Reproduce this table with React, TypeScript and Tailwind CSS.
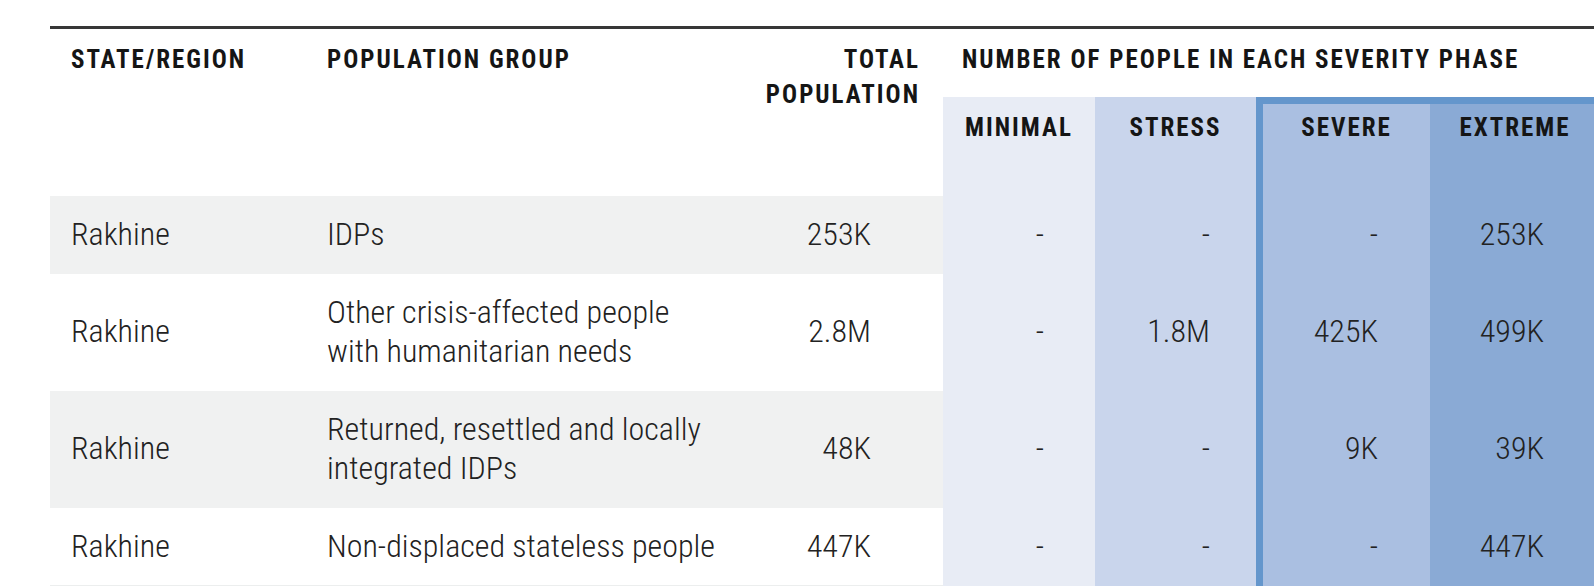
import React from 'react'

interface Row {
  region: string
  group: string[]
  total: string
  minimal: string
  stress: string
  severe: string
  extreme: string
}

const ROWS: Row[] = [
  { region: 'Rakhine', group: ['IDPs'], total: '253K', minimal: '-', stress: '-', severe: '-', extreme: '253K' },
  {
    region: 'Rakhine',
    group: ['Other crisis-affected people', 'with humanitarian needs'],
    total: '2.8M',
    minimal: '-',
    stress: '1.8M',
    severe: '425K',
    extreme: '499K',
  },
  {
    region: 'Rakhine',
    group: ['Returned, resettled and locally', 'integrated IDPs'],
    total: '48K',
    minimal: '-',
    stress: '-',
    severe: '9K',
    extreme: '39K',
  },
  { region: 'Rakhine', group: ['Non-displaced stateless people'], total: '447K', minimal: '-', stress: '-', severe: '-', extreme: '447K' },
]

const COLS = 'grid grid-cols-[256px_440px_197px_152px_161px_174px_170px]'
const head = "font-['Roboto',sans-serif] [font-stretch:75%] font-bold text-[25px] leading-[34.5px] tracking-[0.08em] text-[#151515] uppercase"
const body = "font-['Roboto',sans-serif] [font-stretch:75%] font-light text-[32px] leading-[39.5px] text-[#222]"

export default function App() {
  return (
    <div className="w-full h-[586px] overflow-hidden bg-white">
      <div className="ml-[50px] mt-[26px] w-[1550px]">
        <div className="h-[3px] bg-[#373737]" />

        {/* Header */}
        <div className={`${COLS} grid-rows-[68px_99px]`}>
          <div className={`${head} row-span-2 pl-[21px] pt-[14px]`}>State/Region</div>
          <div className={`${head} row-span-2 pl-[21px] pt-[14px]`}>Population group</div>
          <div className={`${head} row-span-2 pr-[23px] pt-[14px] text-right`}>
            Total
            <br />
            Population
          </div>
          <div className={`${head} col-span-4 pl-[19px] pt-[14px] whitespace-nowrap`}>
            Number of people in each severity phase
          </div>
          <div className={`${head} bg-[#e8ecf5] pt-[14px] text-center`}>Minimal</div>
          <div className={`${head} bg-[#c9d5ec] pt-[14px] text-center`}>Stress</div>
          <div className={`${head} bg-[#aabfe1] border-l-[7px] border-t-[7px] border-[#6496cc] pt-[7px] text-center`}>
            Severe
          </div>
          <div className={`${head} bg-[#8aaad5] border-t-[7px] border-[#6496cc] pt-[7px] text-center`}>Extreme</div>
        </div>

        {/* Body */}
        {ROWS.map((r, i) => {
          const stripe = i % 2 === 0 ? 'bg-[#f0f1f1]' : 'bg-white'
          return (
            <div key={i} className={`${COLS} ${body}`}>
              <div className={`${stripe} flex items-center pl-[21px] py-[19px]`}>{r.region}</div>
              <div className={`${stripe} flex flex-col justify-center pl-[21px] py-[19px] whitespace-nowrap`}>
                {r.group.map((g) => (
                  <span key={g}>{g}</span>
                ))}
              </div>
              <div className={`${stripe} flex items-center justify-end pr-[72px]`}>{r.total}</div>
              <div className="bg-[#e8ecf5] flex items-center justify-end pr-[51px]">{r.minimal}</div>
              <div className="bg-[#c9d5ec] flex items-center justify-end pr-[46px]">{r.stress}</div>
              <div className="bg-[#aabfe1] border-l-[7px] border-[#6496cc] flex items-center justify-end pr-[52px]">
                {r.severe}
              </div>
              <div className="bg-[#8aaad5] flex items-center justify-end pr-[56px]">{r.extreme}</div>
            </div>
          )
        })}
        <div className={COLS}>
          <div className="col-span-3 h-[2px] bg-[#eceeee]" />
          <div className="h-[20px] bg-[#e8ecf5]" />
          <div className="bg-[#c9d5ec]" />
          <div className="bg-[#aabfe1] border-l-[7px] border-[#6496cc]" />
          <div className="bg-[#8aaad5]" />
        </div>
      </div>
    </div>
  )
}
